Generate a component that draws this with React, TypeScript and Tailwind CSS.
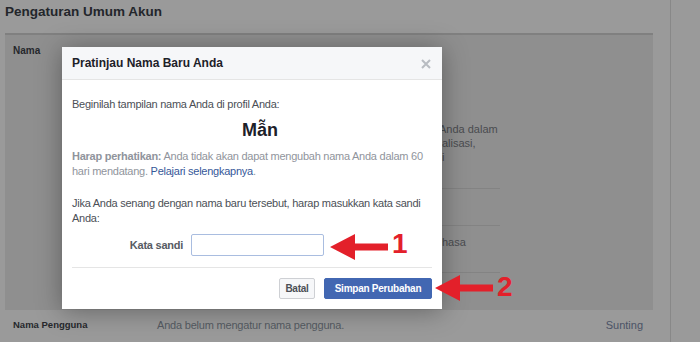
import React from 'react'

function Arrow({ className }: { className: string }) {
  return (
    <svg className={className} viewBox="0 0 60 28" width="60" height="28">
      <path d="M0 14 L25 1 L25 10.5 L58 10.5 L58 17.5 L25 17.5 L25 27 Z" fill="#e3202a" />
    </svg>
  )
}

function Dialog() {
  return (
    <div className="absolute left-[62px] top-[47px] w-[380px] h-[262px] bg-white shadow-[0_2px_24px_rgba(0,0,0,0.35)] flex flex-col">
      <div className="h-[33px] bg-[#f6f7f9] border-b border-[#e5e5e5] flex items-center justify-between pl-[10px] pr-[10px]">
        <span className="text-[12px] font-bold text-[#1d2129]">Pratinjau Nama Baru Anda</span>
        <svg width="10" height="10" viewBox="0 0 10 10" className="mr-[1px] mt-[2px]">
          <path d="M1 1 L9 9 M9 1 L1 9" stroke="#b8bcc2" strokeWidth="2" />
        </svg>
      </div>
      <div className="flex flex-col px-[10px] pt-[17px] text-[11px] leading-[15px] tracking-[-0.25px] text-[#4b4f56]">
        <p>Beginilah tampilan nama Anda di profil Anda:</p>
        <p className="mt-[6px] text-center pl-[16px] text-[18px] leading-[24px] tracking-normal font-bold text-[#1d2129]">Mẫn</p>
        <p className="mt-[7px] text-[#90949c] whitespace-nowrap">
          <span className="font-bold">Harap perhatikan:</span> Anda tidak akan dapat mengubah nama Anda dalam 60
          <br />
          hari mendatang. <span className="text-[#365899]">Pelajari selengkapnya</span>.
        </p>
        <p className="mt-[17px] whitespace-nowrap">
          Jika Anda senang dengan nama baru tersebut, harap masukkan kata sandi
          <br />
          Anda:
        </p>
        <div className="mt-[8px] flex items-center">
          <label className="w-[111px] text-right font-bold text-[#575b63]">Kata sandi</label>
          <div className="ml-[8px] w-[133px] h-[22px] border border-[#a9bde0] rounded-[2px] bg-white" />
        </div>
        <div className="mt-[11px] border-t border-[#e5e5e5]" />
        <div className="mt-[10px] flex justify-end gap-[9px]">
          <button className="h-[21px] w-[36px] bg-[#f6f7f9] border border-[#ced0d4] rounded-[2px] text-[10px] font-bold text-[#4b4f56]">
            Batal
          </button>
          <button className="h-[21px] w-[108px] bg-[#4267b2] border border-[#4267b2] rounded-[2px] text-[10px] font-bold text-white">
            Simpan Perubahan
          </button>
        </div>
      </div>
    </div>
  )
}

export default function App() {
  return (
    <div className="relative w-[700px] h-[342px] overflow-hidden bg-[#9a9a9a] flex font-['Liberation_Sans',Arial,sans-serif]">
      <div className="w-[671px] border-r border-[#888888] flex flex-col">
        <div className="h-[33px] pl-[5px] pt-[2px]">
          <h1 className="text-[13.5px] leading-[20px] font-bold text-[#23262b]">Pengaturan Umum Akun</h1>
        </div>
        <div className="ml-[5px] w-[648px] h-[277px] bg-[#8f8f8f] border-t-2 border-[#808080] flex flex-col">
          <div className="pl-[8px] pt-[9px] text-[10px] leading-[14px] font-bold text-[#26282c]">Nama</div>
          <div className="ml-[437px] w-[58px] flex flex-col text-[11px] leading-[14px] text-[#4a4c50]">
            <span className="mt-[64px] -ml-[3px] whitespace-nowrap">Anda dalam</span>
            <span className="whitespace-nowrap">alisasi,</span>
            <span className="whitespace-nowrap">i</span>
            <div className="mt-[24px] h-px bg-[#838383]" />
            <div className="mt-[36px] h-px bg-[#838383]" />
            <span className="mt-[9px] whitespace-nowrap">hasa</span>
            <div className="mt-[23px] h-px bg-[#838383]" />
          </div>
        </div>
        <div className="h-[30px] flex items-center">
          <span className="w-[157px] pl-[13px] text-[9.5px] font-bold text-[#26282c]">Nama Pengguna</span>
          <span className="flex-1 text-[#555a62] text-[11px] tracking-[-0.2px]">Anda belum mengatur nama pengguna.</span>
          <span className="mr-[27px] text-[#4b5366] text-[11px]">Sunting</span>
        </div>
      </div>
      <div className="flex-1" />

      <Dialog />

      <Arrow className="absolute left-[330px] top-[233px]" />
      <span className="absolute left-[392px] top-[228px] text-[28px] leading-[32px] font-bold text-[#e3202a]">1</span>
      <Arrow className="absolute left-[435px] top-[274px]" />
      <span className="absolute left-[497px] top-[271px] text-[28px] leading-[32px] font-bold text-[#e3202a]">2</span>
    </div>
  )
}
